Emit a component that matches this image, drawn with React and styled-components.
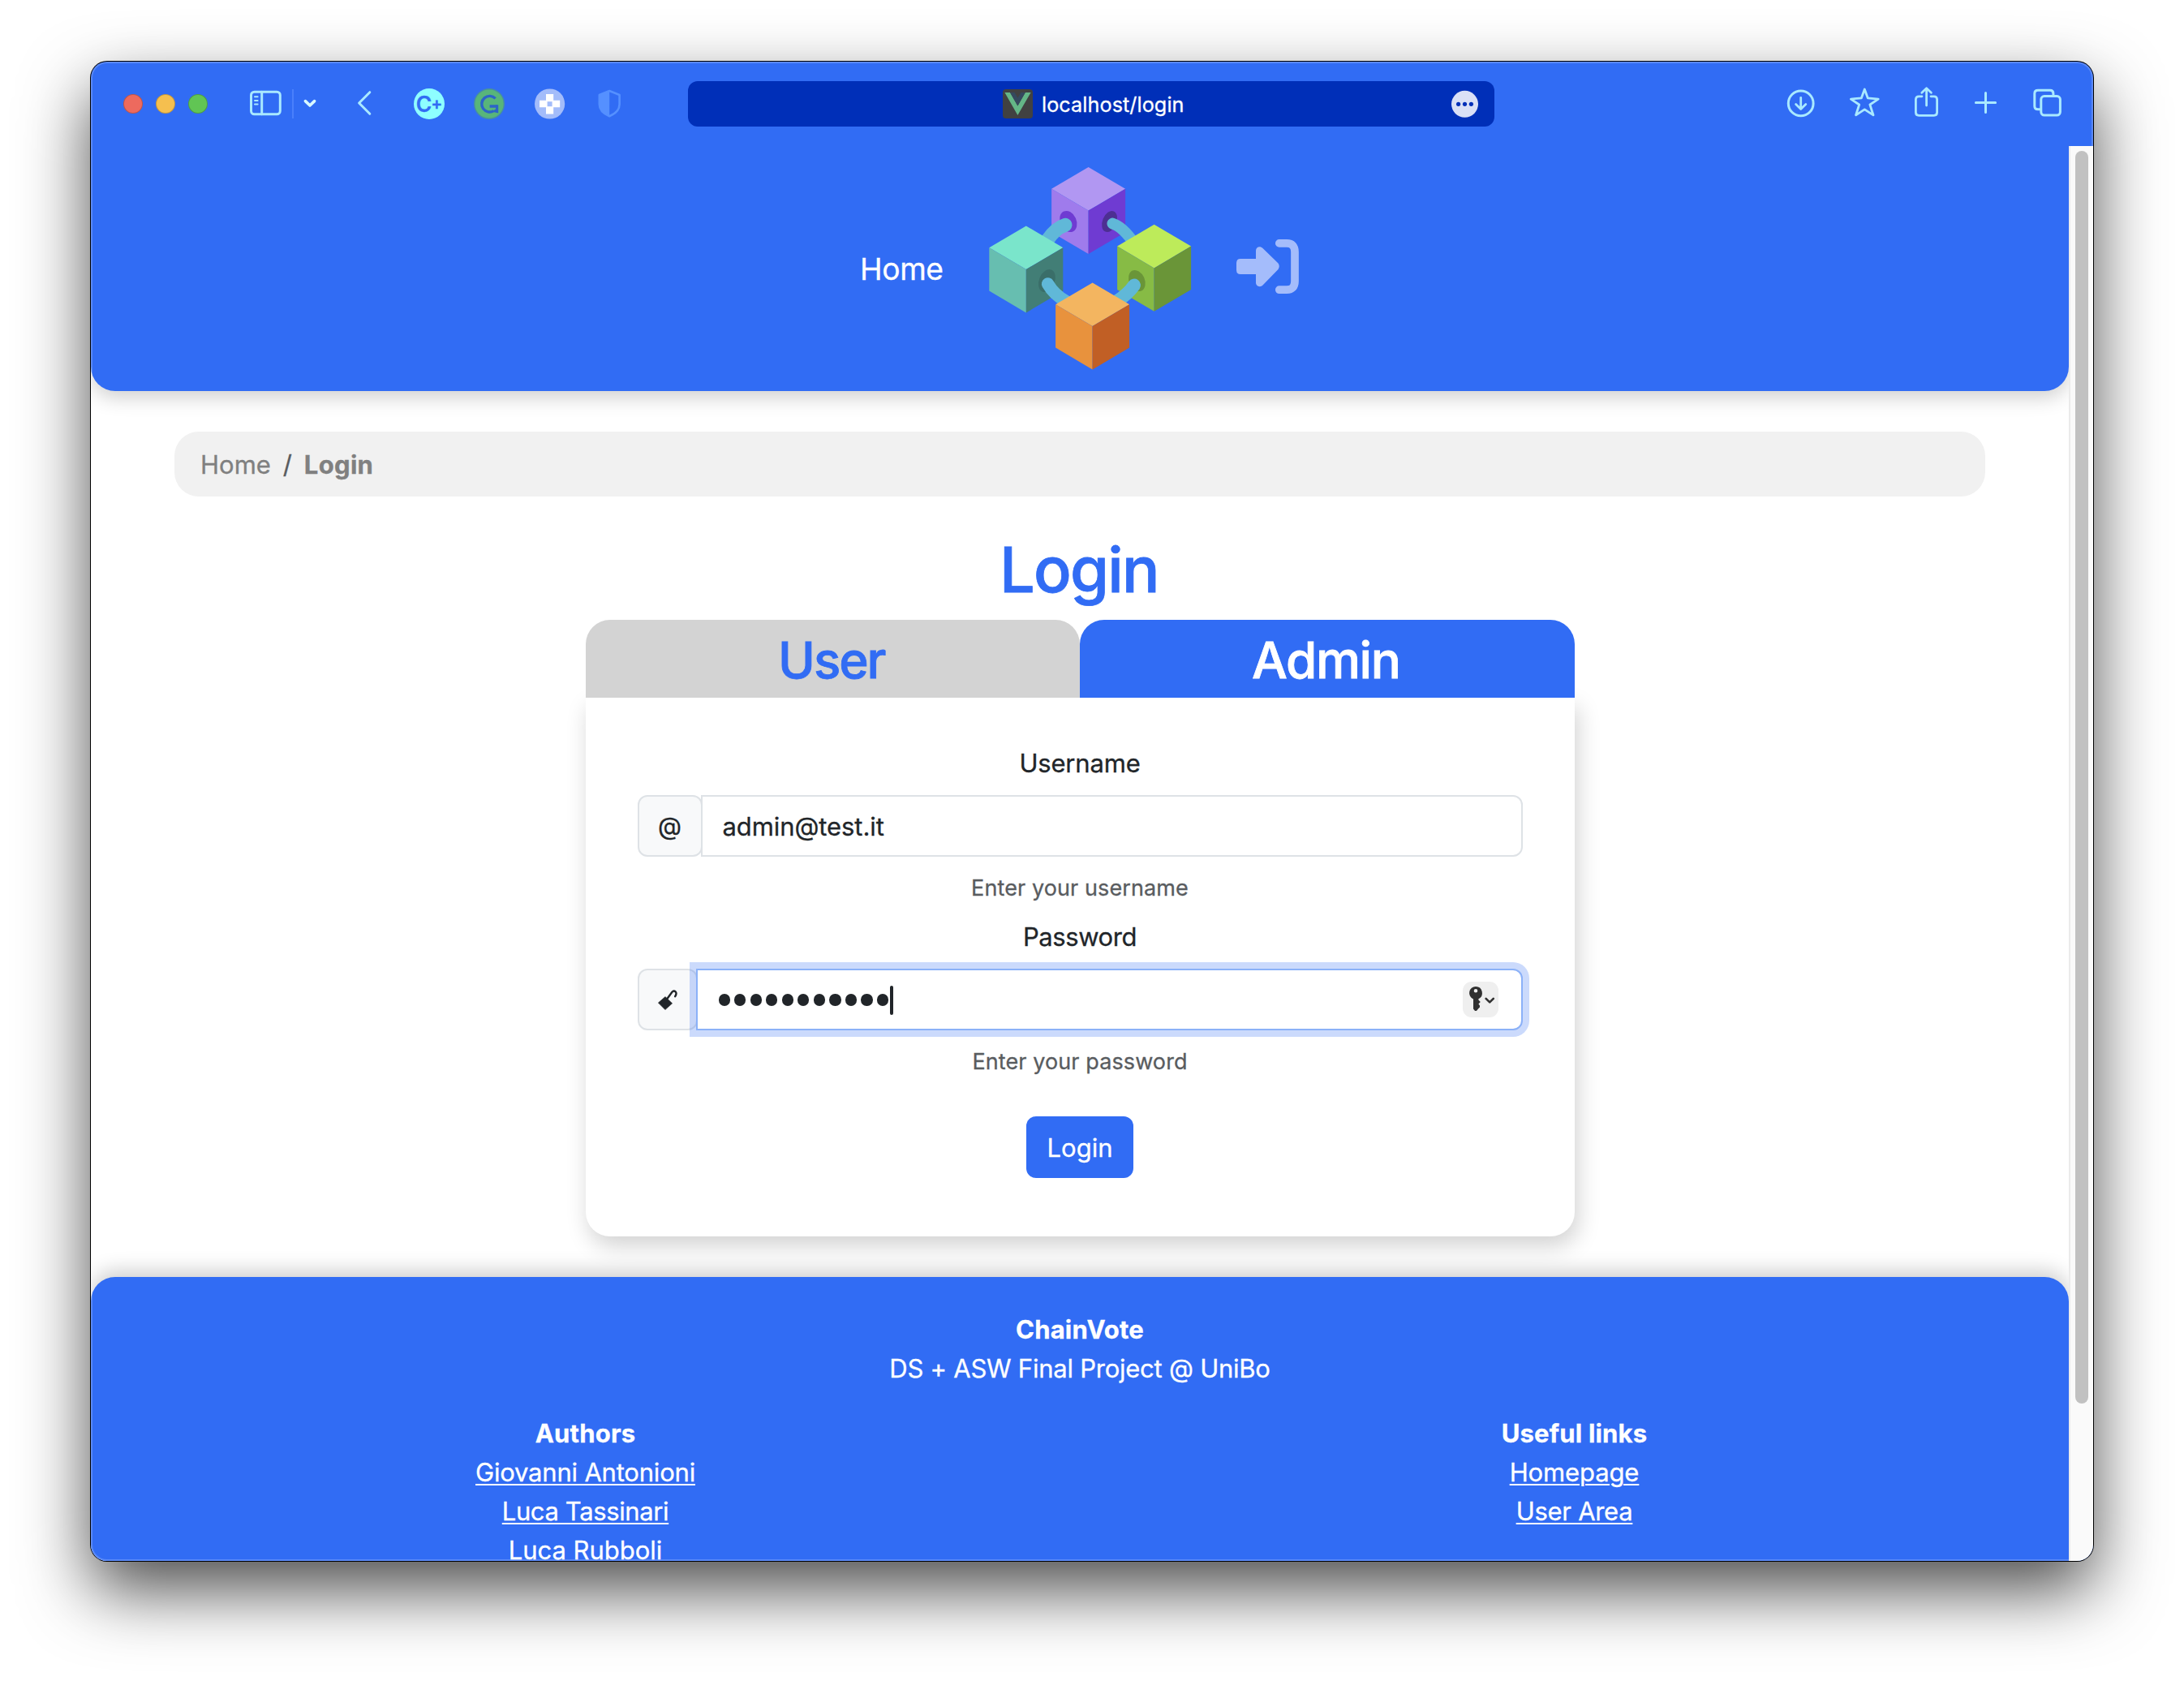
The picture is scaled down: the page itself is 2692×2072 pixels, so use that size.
import React from "react";
import styled, { createGlobalStyle, css } from "styled-components";

const blue = "#316cf4";
const iconTint = "#a9e9ff";

const GlobalStyle = createGlobalStyle`
  *, *::before, *::after { box-sizing: border-box; }
  body {
    margin: 0;
    background: #fff;
    font-family: "Inter", "Liberation Sans", sans-serif;
    color: #212529;
    -webkit-text-stroke: 0.3px currentColor;
  }
  h1, h2, p { margin: 0; }
`;

/* ---------- window ---------- */

const Desktop = styled.div`
  width: 2692px;
  height: 2072px;
  padding: 76px 112px 0;
  overflow: hidden;
  background: #fff;
`;

const Window = styled.div`
  position: relative;
  display: flex;
  flex-direction: column;
  width: 2468px;
  height: 1848px;
  overflow: hidden;
  border-radius: 20px;
  background: ${blue};
  box-shadow: 0 0 0 1px #000, 0 36px 84px rgba(0, 0, 0, 0.7);

  &::after {
    content: "";
    position: absolute;
    inset: 0;
    border-radius: inherit;
    box-shadow: inset 0 0 0 2px rgba(255, 255, 255, 0.2);
    pointer-events: none;
  }
`;

const Toolbar = styled.div`
  display: grid;
  grid-template-columns: 736px 994px 1fr;
  align-items: center;
  height: 104px;
  flex: none;
`;

const ToolGroup = styled.div`
  display: flex;
  align-items: center;
  height: 40px;
  padding-left: ${(p) => p.$start}px;
`;

const Light = styled.span`
  width: 24px;
  height: 24px;
  margin-right: 16px;
  border-radius: 50%;
  border: 1px solid rgba(0, 0, 0, 0.2);
  background: ${(p) => p.$color};
`;

const ToolIcon = styled.svg.attrs((p) => ({ height: 40, viewBox: `0 0 ${p.width} 40` }))`
  display: block;
  flex: none;
  margin-left: ${(p) => p.$gap || 0}px;
  overflow: visible;
  fill: none;
  stroke: ${(p) => p.$stroke || iconTint};
  stroke-width: 3;
  stroke-linecap: round;
  stroke-linejoin: round;
`;

const ToolDivider = styled.span`
  width: 2px;
  height: 36px;
  margin-left: 12px;
  background: #4a80fb;
`;

const ExtensionBadge = styled.span`
  display: flex;
  align-items: center;
  justify-content: center;
  width: 38px;
  height: 38px;
  margin-left: 52px;
  border-radius: 50%;
  background: #8effff;
  color: ${blue};
  font-size: 26.5px;
  font-weight: 600;
  line-height: 38px;
`;

const BadgePlus = styled.span`
  font-size: 21px;
  margin-left: -1px;
`;

const AddressBar = styled.div`
  display: flex;
  align-items: center;
  height: 56px;
  padding: 0 20px 0 388px;
  border-radius: 12px;
  background: #002fb8;
`;

const Address = styled.span`
  flex: 1;
  margin-left: 11px;
  padding-top: 1px;
  color: #fff;
  font-size: 25.2px;
  letter-spacing: 0.08px;
  line-height: 36px;
`;

/* ---------- page ---------- */

const Viewport = styled.div`
  display: flex;
  flex: 1;
  min-height: 0;
`;

const Page = styled.div`
  width: 2438px;
  height: 100%;
  overflow: hidden;
  background: #fff;
`;

const ScrollTrack = styled.div`
  width: 30px;
  height: 100%;
  padding: 6px 0 0 6px;
  border-left: 2px solid #ebebeb;
  background: #fafafa;
`;

const ScrollThumb = styled.div`
  width: 16px;
  height: 1544px;
  border-radius: 8px;
  background: #c1c1c1;
`;

const Header = styled.header`
  display: flex;
  align-items: center;
  justify-content: center;
  gap: 54px;
  height: 302px;
  border-radius: 0 0 30px 30px;
  background: ${blue};
  box-shadow: 0 8px 24px rgba(0, 0, 0, 0.19);
`;

const NavLink = styled.a`
  width: 104px;
  padding-top: 2px;
  color: #fff;
  font-size: 37.2px;
  letter-spacing: -0.4px;
  line-height: 58px;
`;

const SignInIcon = styled.svg`
  margin-bottom: 5px;
`;

const Main = styled.main`
  padding: 50px 103px;
  height: 1092px;
`;

const Breadcrumb = styled.nav`
  display: flex;
  align-items: center;
  height: 80px;
  padding: 1px 32px 0;
  border-radius: 30px;
  background: #f1f1f1;
  font-size: 31px;
  line-height: 49px;
`;

const Crumb = styled.span`
  color: #808080;
  ${(p) =>
    p.$active &&
    css`
      font-weight: 700;
      letter-spacing: 0.3px;
    `}
`;

const CrumbSlash = styled.span`
  width: 11px;
  margin: 0 15px;
  color: #595c5f;
`;

const Title = styled.h1`
  margin: 42px 0 14px;
  padding-right: 2px;
  text-align: center;
  color: ${blue};
  font-size: 77.4px;
  font-weight: 500;
  letter-spacing: -1.74px;
  line-height: 96px;
  -webkit-text-stroke-width: 0.8px;
`;

const LoginPanel = styled.section`
  width: 1219px;
  margin: 0 auto;
`;

const Tabs = styled.div`
  display: grid;
  grid-template-columns: 1fr 1fr;
`;

const Tab = styled.h2`
  height: 96px;
  padding: 3px 3px 0 0;
  border-radius: 30px 30px 0 0;
  text-align: center;
  background: ${(p) => (p.$active ? blue : "#d3d3d3")};
  color: ${(p) => (p.$active ? "#fff" : blue)};
  font-size: 62px;
  font-weight: 500;
  letter-spacing: ${(p) => p.$tracking}px;
  line-height: 93px;
  -webkit-text-stroke-width: 0.8px;
`;

const Card = styled.form`
  display: flex;
  flex-direction: column;
  align-items: center;
  height: 664px;
  padding: 57px 64px 0;
  border-radius: 0 0 30px 30px;
  background: #fff;
  box-shadow: 4px 12px 28px rgba(0, 0, 0, 0.18);
`;

const Label = styled.label`
  margin-bottom: 15px;
  font-size: 31px;
  letter-spacing: ${(p) => p.$tracking}px;
  line-height: 48px;
`;

const InputGroup = styled.div`
  display: flex;
  width: 100%;
  height: 76px;
`;

const Addon = styled.span`
  display: flex;
  align-items: center;
  justify-content: center;
  width: ${(p) => p.$width}px;
  border: 2px solid #dee2e6;
  border-radius: 12px;
  background: #f8f9fa;
  font-size: 30px;
`;

const Field = styled.div`
  display: flex;
  flex: 1;
  align-items: center;
  margin-left: -2px;
  padding: 0 28px 0 25px;
  border: 2px solid ${(p) => (p.$focused ? "#8bb1f8" : "#dee2e6")};
  border-radius: 0 12px 12px 0;
  background: #fff;
  ${(p) => p.$focused && "box-shadow: 0 0 0 8px rgba(49, 108, 244, 0.25);"}
`;

const FieldText = styled.span`
  padding-top: 2px;
  font-size: 31px;
  letter-spacing: -0.08px;
  line-height: 48px;
`;

const Dots = styled.span`
  display: flex;
  flex: 1;
  align-items: center;
  gap: 5.14px;
  padding: 1px 0 0 1px;
`;

const Dot = styled.span`
  width: 14.4px;
  height: 14.4px;
  border-radius: 50%;
  background: #212529;
`;

const Caret = styled.span`
  width: 4px;
  height: 36px;
  margin-left: -3px;
  border-radius: 2px;
  background: #212529;
`;

const KeyButton = styled.span`
  width: 44px;
  height: 44px;
  border-radius: 11px;
  background: #efefef;
`;

const Hint = styled.p`
  margin: 18px 0 ${(p) => p.$bottom}px;
  color: #595c5f;
  font-size: 27px;
  letter-spacing: 0.1px;
  line-height: 42px;
`;

const Submit = styled.button`
  width: 132px;
  height: 76px;
  padding: 1px 0 0;
  border: 0;
  border-radius: 12px;
  background: ${blue};
  color: #fff;
  font: 400 31px/48px "Inter", "Liberation Sans", sans-serif;
`;

const Footer = styled.footer`
  height: 500px;
  padding-top: 41px;
  border-radius: 30px 30px 0 0;
  background: ${blue};
  box-shadow: 0 -8px 24px rgba(0, 0, 0, 0.19);
  color: #fff;
  text-align: center;
  font-size: 31px;
  line-height: 48px;
`;

const FooterColumns = styled.div`
  display: grid;
  grid-template-columns: 1fr 1fr;
  margin-top: 32px;
`;

const FooterHeading = styled.p`
  font-weight: 700;
  letter-spacing: 0.2px;
`;

const FooterText = styled.p`
  letter-spacing: -0.24px;
`;

const FooterLink = styled.a`
  display: block;
  width: fit-content;
  margin: 0 auto;
  color: #fff;
  letter-spacing: ${(p) => p.$tracking}px;
  text-decoration: underline;
  text-decoration-thickness: 2px;
  text-underline-offset: 3px;
`;

/* ---------- drawings ---------- */

const Cube = ({ x, y, top, left, right }) => (
  <g transform={`translate(${x} ${y})`}>
    <path d="M0 0L45.5 26.8L0 53.6L-45.5 26.8Z" fill={top} />
    <path d="M-45.5 26.8L0 53.6V107L-45.5 80.2Z" fill={left} />
    <path d="M45.5 26.8L0 53.6V107L45.5 80.2Z" fill={right} />
  </g>
);

const Logo = () => (
  <svg width="252" height="254" viewBox="0 0 252 254">
    <Cube x={123.6} y={2} top="#b197f2" left="#9f7bec" right="#6f3bd2" />
    <ellipse cx="98.8" cy="69" rx="10" ry="13.6" transform="rotate(-24 98.8 69)" fill="#6f3bd2" />
    <ellipse cx="149.6" cy="69" rx="8.6" ry="13.6" transform="rotate(22 149.6 69)" fill="#4d2f92" />
    <g fill="none" stroke="#60b8d8" strokeLinecap="round">
      <path d="M95 73.3Q83 77 73 92" strokeWidth="17" />
      <path d="M153.4 71.6Q166 75.5 180 96" strokeWidth="14" />
    </g>
    <Cube x={46.8} y={74.4} top="#7ae5cb" left="#67beb0" right="#427e76" />
    <Cube x={204.6} y={72.8} top="#bdeb5a" left="#87bb45" right="#6a9538" />
    <ellipse cx="72.4" cy="142" rx="9.6" ry="14.6" transform="rotate(22 72.4 142)" fill="#3a6e69" />
    <ellipse cx="183.4" cy="142" rx="9.6" ry="13.6" transform="rotate(-24 183.4 142)" fill="#6a9538" />
    <g fill="none" stroke="#60b8d8" strokeLinecap="round">
      <path d="M73.6 146Q81 159 96 167.5" strokeWidth="15.5" />
      <path d="M180 147.6Q172 159 158 167.5" strokeWidth="16" />
    </g>
    <Cube x={128.6} y={144.4} top="#f3b560" left="#e8923d" right="#c15f25" />
  </svg>
);

const SignIn = () => (
  <SignInIcon width="78" height="68" viewBox="0 0 78 68" fill="#a4bcfb">
    <path d="M5 24H24V14C24 9.5 29 7.5 32.5 11L51.5 29.5Q54 33 51.5 37L32.5 56.5C29 60 24 57.5 24 53.5V43H5Q0 43 0 38V29Q0 24 5 24Z" />
    <path
      d="M52.8 4.9H62Q72 4.9 72 15.5V51.5Q72 62.2 62 62.2H52.8"
      fill="none"
      stroke="#a4bcfb"
      strokeWidth="9.7"
      strokeLinecap="round"
    />
  </SignInIcon>
);

const BrowserTools = () => (
  <ToolGroup $start={40}>
    <Light $color="#ed6a5e" />
    <Light $color="#f5bf4f" />
    <Light $color="#61c554" />
    <ToolIcon width={40} $gap={36}>
      <rect x="1.5" y="5.2" width="35.8" height="27.6" rx="4" />
      <path d="M14.7 5.2V32.8" />
      <path d="M6 11.3H9.6M6 16H9.6M6 20.4H9.6" strokeWidth="2" />
    </ToolIcon>
    <ToolDivider />
    <ToolIcon width={16} $gap={12} $stroke="#d8f8ff">
      <path d="M2.4 16.6L8 22L13.6 16.6" strokeWidth="3.6" />
    </ToolIcon>
    <ToolIcon width={18} $gap={50}>
      <path d="M15.8 5.7L2.6 19L15.8 32.3" />
    </ToolIcon>
    <ExtensionBadge>
      C<BadgePlus>+</BadgePlus>
    </ExtensionBadge>
    <ToolIcon width={38} $gap={36} $stroke="#2c64c8">
      <circle cx="19" cy="20" r="18.3" fill="#58b57a" stroke="#478fa0" strokeWidth="1.4" />
      <path
        d="M26.6 13.4A9.8 9.8 0 1 0 24.6 28.6M19.6 23H28.6"
        strokeWidth="3.4"
        strokeLinecap="butt"
      />
      <path d="M30.2 21.3V31.4L22.4 29.4L27 26.6V21.3Z" fill="#2c64c8" stroke="none" />
    </ToolIcon>
    <ToolIcon width={38} $gap={37}>
      <circle cx="18.6" cy="20" r="18.6" fill="#a3bcfa" stroke="none" />
      <path
        d="M14 8H23.2V15.8H31.2V24.2H23.2V32.4H14V24.2H6V15.8H14Z"
        fill="#fff"
        stroke="none"
      />
      <rect x="15.6" y="17.2" width="6" height="6" fill="#a3bcfa" stroke="none" />
    </ToolIcon>
    <ToolIcon width={28} $gap={40} $stroke="#5590ff">
      <path d="M14.2 4L26.6 9V20.5C26.6 27.5 21 32.4 14.2 35.2C7.4 32.4 1.8 27.5 1.8 20.5V9Z" strokeWidth="2.6" />
      <path d="M14.2 4V35.2C7.4 32.4 1.8 27.5 1.8 20.5V9Z" fill="#5590ff" stroke="none" />
    </ToolIcon>
  </ToolGroup>
);

const PageTools = () => (
  <ToolGroup $start={360}>
    <ToolIcon width={36}>
      <circle cx="17.7" cy="19.4" r="15.4" />
      <path d="M17.7 12.3V26M11.6 20.4L17.7 26.4L23.8 20.4" strokeWidth="2.8" />
    </ToolIcon>
    <ToolIcon width={40} $gap={41}>
      <path
        d="M19.3 2L23.2 12.8L36.2 14.2L25.9 21L30 33.8L19.3 26.8L8.6 33.8L12.7 21L2.4 14.2L15.4 12.8Z"
        strokeWidth="2.8"
      />
    </ToolIcon>
    <ToolIcon width={32} $gap={40}>
      <path d="M10 10.8H6.2Q2.4 10.8 2.4 14.6V30.6Q2.4 34.4 6.2 34.4H24.8Q28.6 34.4 28.6 30.6V14.6Q28.6 10.8 24.8 10.8H21" strokeWidth="2.8" />
      <path d="M15.6 1.2V22M9.8 6.2L15.6 0.8L21.4 6.2" strokeWidth="2.8" />
    </ToolIcon>
    <ToolIcon width={29} $gap={42}>
      <path d="M14.5 6.4V30.6M2.4 18.5H26.6" />
    </ToolIcon>
    <ToolIcon width={38} $gap={43}>
      <path d="M9.4 26.8H7Q2.8 26.8 2.8 22.8V7.2Q2.8 3.2 7 3.2H22Q25.9 3.2 25.9 7.2V9" />
      <rect x="10.8" y="10.6" width="23.6" height="23.4" rx="4" />
    </ToolIcon>
  </ToolGroup>
);

const Favicon = () => (
  <svg width="37" height="36" viewBox="0 0 37 36">
    <rect width="37" height="36" rx="4" fill="#414141" />
    <path d="M2.4 4H9L18.4 20.6L27.8 4H34.6L18.4 32Z" fill="#64b687" />
    <path d="M9 4H14.6L18.4 10.8L22.4 4H27.8L18.4 20.6Z" fill="#35495e" />
  </svg>
);

const More = () => (
  <svg width="33" height="34" viewBox="0 0 33 34">
    <circle cx="16.5" cy="17.3" r="16.5" fill="#dae0f6" />
    <g fill="#002fb8">
      <circle cx="8.6" cy="17.3" r="2.6" />
      <circle cx="16.5" cy="17.3" r="2.6" />
      <circle cx="24.4" cy="17.3" r="2.6" />
    </g>
  </svg>
);

const Padlock = () => (
  <svg width="24" height="26" viewBox="0 0 24 26">
    <path d="M9 9.6L17.6 17.8L8.9 25.6L0.4 17Z" fill="#212529" stroke="#212529" strokeWidth="0.6" strokeLinejoin="round" />
    <path d="M11.4 12L17.4 3.8Q19.6 1.4 21.6 3.4Q23.6 5.4 21.2 9.2" fill="none" stroke="#212529" strokeWidth="2.4" strokeLinecap="round" />
  </svg>
);

const KeyMenu = () => (
  <KeyButton>
    <svg width="44" height="44" viewBox="0 0 44 44">
      <path
        fillRule="evenodd"
        fill="#303030"
        d="M16 6A8 8 0 0 1 19.4 21.2V22.4L21.8 25L19.4 27.6L21 29.6V31.4L19.2 33.2L17.4 35.4Q16 36.4 14.6 35.4L13 33.6V21.4A8 8 0 0 1 16 6ZM16 9A2.3 2.3 0 1 0 16 13.6A2.3 2.3 0 1 0 16 9Z"
      />
      <path d="M28.6 20.8L33.2 25.4L37.8 20.8" fill="none" stroke="#303030" strokeWidth="2.6" strokeLinecap="round" strokeLinejoin="round" />
    </svg>
  </KeyButton>
);

export default function App() {
  return (
    <Desktop>
      <GlobalStyle />
      <Window>
        <Toolbar>
          <BrowserTools />
          <AddressBar>
            <Favicon />
            <Address>localhost/login</Address>
            <More />
          </AddressBar>
          <PageTools />
        </Toolbar>
        <Viewport>
          <Page>
            <Header>
              <NavLink>Home</NavLink>
              <Logo />
              <SignIn />
            </Header>
            <Main>
              <Breadcrumb>
                <Crumb>Home</Crumb>
                <CrumbSlash>/</CrumbSlash>
                <Crumb $active>Login</Crumb>
              </Breadcrumb>
              <Title>Login</Title>
              <LoginPanel>
                <Tabs>
                  <Tab $tracking={-2.1}>User</Tab>
                  <Tab $active $tracking={-1.47}>Admin</Tab>
                </Tabs>
                <Card>
                  <Label $tracking={-0.18}>Username</Label>
                  <InputGroup>
                    <Addon $width={80}>@</Addon>
                    <Field>
                      <FieldText>admin@test.it</FieldText>
                    </Field>
                  </InputGroup>
                  <Hint $bottom={15}>Enter your username</Hint>
                  <Label $tracking={-0.42}>Password</Label>
                  <InputGroup>
                    <Addon $width={74}>
                      <Padlock />
                    </Addon>
                    <Field $focused>
                      <Dots>
                        {Array.from({ length: 11 }, (_, i) => (
                          <Dot key={i} />
                        ))}
                        <Caret />
                      </Dots>
                      <KeyMenu />
                    </Field>
                  </InputGroup>
                  <Hint $bottom={46}>Enter your password</Hint>
                  <Submit type="button">Login</Submit>
                </Card>
              </LoginPanel>
            </Main>
            <Footer>
              <FooterHeading>ChainVote</FooterHeading>
              <FooterText>DS + ASW Final Project @ UniBo</FooterText>
              <FooterColumns>
                <div>
                  <FooterHeading>Authors</FooterHeading>
                  <FooterLink $tracking={-0.2}>Giovanni Antonioni</FooterLink>
                  <FooterLink $tracking={-0.38}>Luca Tassinari</FooterLink>
                  <FooterLink $tracking={-0.03}>Luca Rubboli</FooterLink>
                </div>
                <div>
                  <FooterHeading>Useful links</FooterHeading>
                  <FooterLink $tracking={-0.12}>Homepage</FooterLink>
                  <FooterLink $tracking={-0.28}>User Area</FooterLink>
                </div>
              </FooterColumns>
            </Footer>
          </Page>
          <ScrollTrack>
            <ScrollThumb />
          </ScrollTrack>
        </Viewport>
      </Window>
    </Desktop>
  );
}
